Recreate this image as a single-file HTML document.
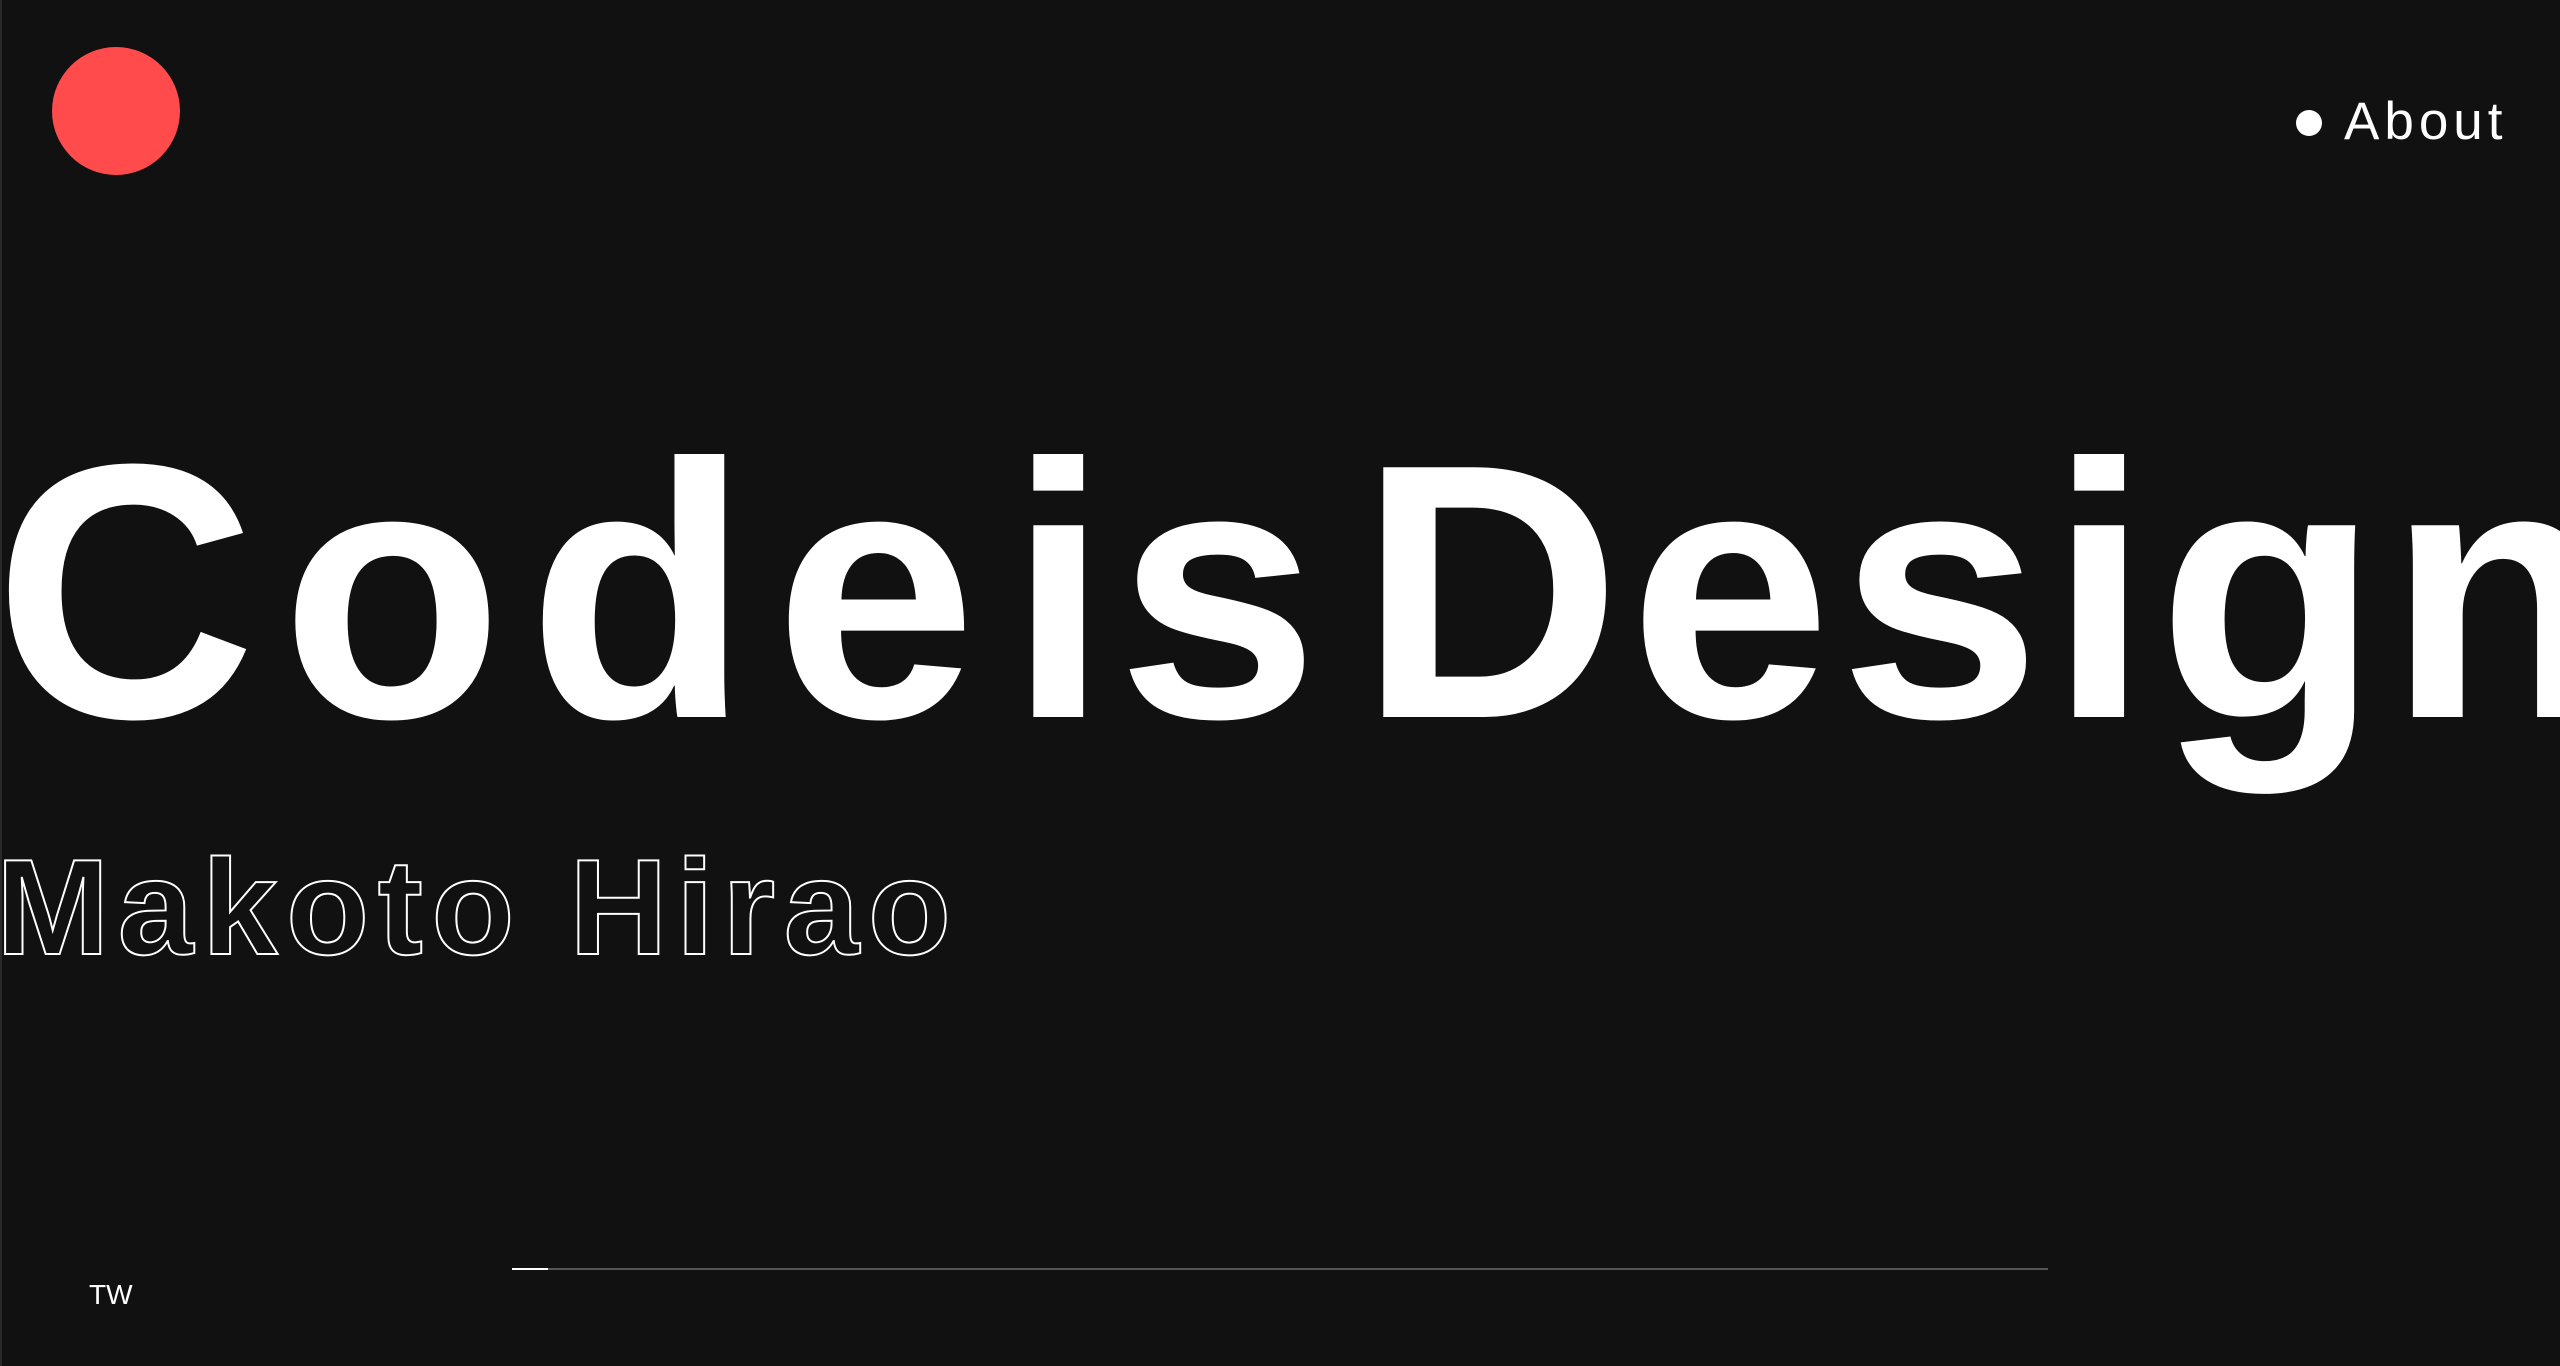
<!DOCTYPE html>
<html><head><meta charset="utf-8"><style>
html,body{margin:0;padding:0;}
body{width:2560px;height:1366px;background:#111;position:relative;overflow:hidden;font-family:"Liberation Sans",sans-serif;border-left:2px solid #2a2a2a;box-sizing:border-box;}
.a{position:absolute;white-space:nowrap;line-height:1;}
.big{font-weight:bold;font-size:363px;color:#fff;top:410px;letter-spacing:8px;}
</style></head><body>
<div class="a" style="left:50px;top:47px;width:128px;height:128px;border-radius:50%;background:#ff4b4b;"></div>
<div class="a" style="left:2294px;top:110px;width:26px;height:26px;border-radius:50%;background:#fff;"></div>
<div class="a" style="left:2342px;top:95px;font-size:53px;color:#fff;letter-spacing:5px;">About</div>
<div class="a big" style="left:-8px;letter-spacing:25px;">Code</div>
<div class="a big" style="left:1006px;">is</div>
<div class="a big" style="left:1357px;">Design</div>
<div class="a" style="left:-6px;top:839px;font-size:136px;font-weight:bold;color:transparent;-webkit-text-stroke:2px #fff;letter-spacing:8.5px;">Makoto Hirao</div>
<div class="a" style="left:87px;top:1281px;font-size:28px;color:#fff;">TW</div>
<div class="a" style="left:510px;top:1268px;width:1536px;height:2px;background:#555;"></div>
<div class="a" style="left:510px;top:1268px;width:36px;height:2px;background:#fff;"></div>
</body></html>
